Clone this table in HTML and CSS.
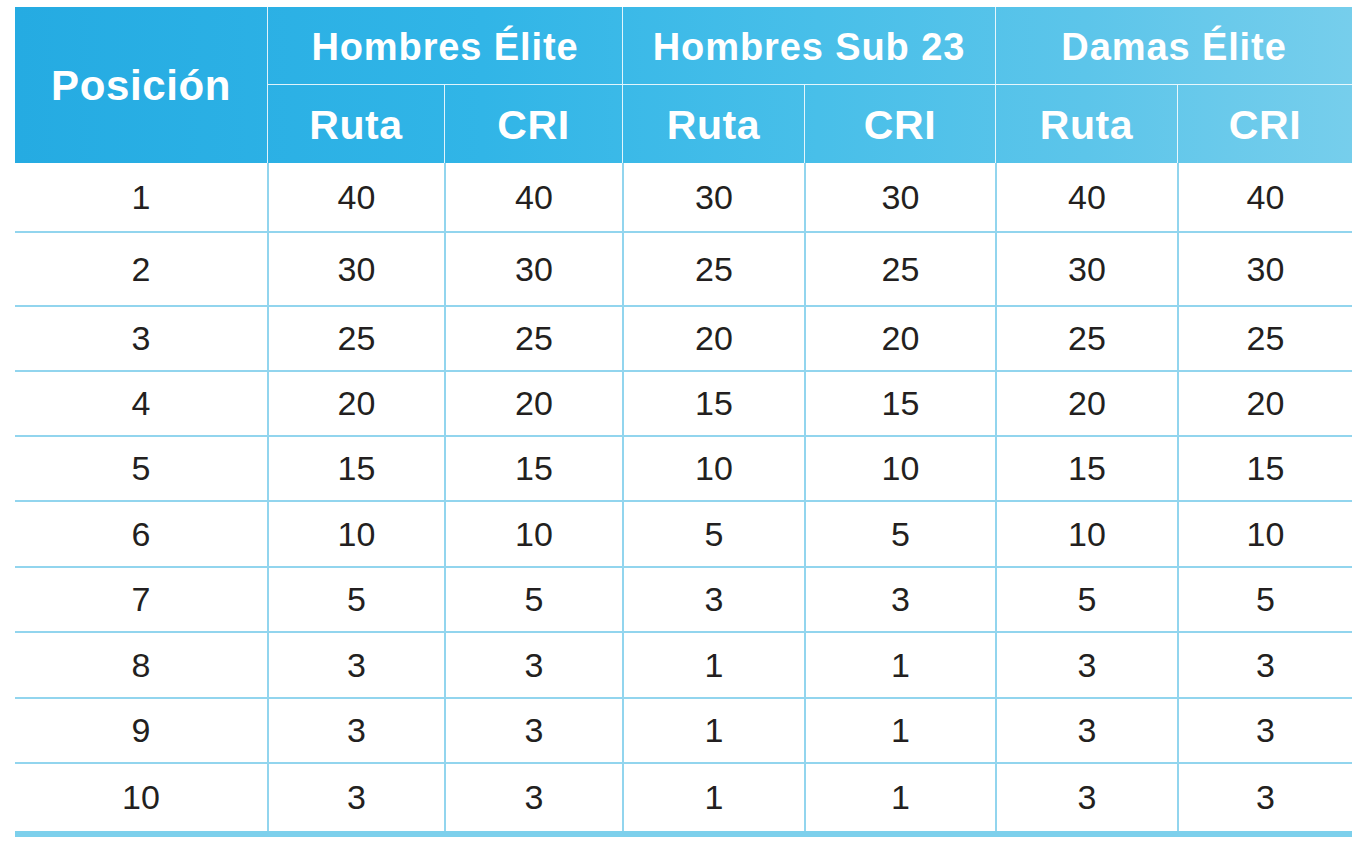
FILE: index.html
```html
<!DOCTYPE html>
<html lang="es">
<head>
<meta charset="utf-8">
<title>Puntos por posición</title>
<link rel="stylesheet" href="styles.css">
</head>
<body>
<div class="wrap">
  <div class="head">
    <div class="hcell pos">Posición</div>
    <div class="hcell group">Hombres Élite</div>
    <div class="hcell group">Hombres Sub 23</div>
    <div class="hcell group">Damas Élite</div>
    <div class="hcell sub">Ruta</div>
    <div class="hcell sub inner">CRI</div>
    <div class="hcell sub">Ruta</div>
    <div class="hcell sub inner">CRI</div>
    <div class="hcell sub">Ruta</div>
    <div class="hcell sub inner">CRI</div>
  </div>
  <div class="body">
    <div class="row"><div class="c">1</div><div class="c">40</div><div class="c">40</div><div class="c">30</div><div class="c">30</div><div class="c">40</div><div class="c">40</div></div>
    <div class="row"><div class="c">2</div><div class="c">30</div><div class="c">30</div><div class="c">25</div><div class="c">25</div><div class="c">30</div><div class="c">30</div></div>
    <div class="row"><div class="c">3</div><div class="c">25</div><div class="c">25</div><div class="c">20</div><div class="c">20</div><div class="c">25</div><div class="c">25</div></div>
    <div class="row"><div class="c">4</div><div class="c">20</div><div class="c">20</div><div class="c">15</div><div class="c">15</div><div class="c">20</div><div class="c">20</div></div>
    <div class="row"><div class="c">5</div><div class="c">15</div><div class="c">15</div><div class="c">10</div><div class="c">10</div><div class="c">15</div><div class="c">15</div></div>
    <div class="row"><div class="c">6</div><div class="c">10</div><div class="c">10</div><div class="c">5</div><div class="c">5</div><div class="c">10</div><div class="c">10</div></div>
    <div class="row"><div class="c">7</div><div class="c">5</div><div class="c">5</div><div class="c">3</div><div class="c">3</div><div class="c">5</div><div class="c">5</div></div>
    <div class="row"><div class="c">8</div><div class="c">3</div><div class="c">3</div><div class="c">1</div><div class="c">1</div><div class="c">3</div><div class="c">3</div></div>
    <div class="row"><div class="c">9</div><div class="c">3</div><div class="c">3</div><div class="c">1</div><div class="c">1</div><div class="c">3</div><div class="c">3</div></div>
    <div class="row"><div class="c">10</div><div class="c">3</div><div class="c">3</div><div class="c">1</div><div class="c">1</div><div class="c">3</div><div class="c">3</div></div>
  </div>
  <div class="band"></div>
</div>
</body>
</html>
```
FILE: styles.css
```css
* { box-sizing: border-box; }
html, body { margin: 0; padding: 0; background: #ffffff; }
body { font-family: "Liberation Sans", Arial, sans-serif; }

.wrap {
  width: 1337px;
  margin: 7px 0 0 15px;
}

.head {
  display: grid;
  grid-template-columns: 252px 177px 178px 182px 191px 182px 175px;
  grid-template-rows: 78px 78px;
  background: linear-gradient(90deg, #25abe2 0%, #31b5e7 35%, #48bfe9 60%, #5cc5ea 80%, #76ceec 100%);
  color: #ffffff;
  font-weight: bold;
}

.hcell {
  display: flex;
  align-items: center;
  justify-content: center;
  border-left: 1px solid rgba(255, 255, 255, 0.85);
  white-space: nowrap;
}

.pos {
  grid-row: 1 / span 2;
  border-left: none;
  font-size: 42px;
  letter-spacing: 0.6px;
  padding-top: 2px;
}

.group {
  grid-column: span 2;
  font-size: 38px;
  letter-spacing: 0.9px;
  padding-top: 4px;
  border-bottom: 1px solid rgba(255, 255, 255, 0.85);
}

.sub {
  font-size: 41px;
  letter-spacing: 0.6px;
  padding-top: 2px;
}

.body {
  display: grid;
  grid-template-rows: 68px 74px 65px 65px 65px 66px 65px 66px 65px 69px;
}

.row {
  display: grid;
  grid-template-columns: 252px 177px 178px 182px 191px 182px 175px;
  border-top: 2px solid #92d5ee;
}

.row:first-child { border-top: none; }

.c {
  display: flex;
  align-items: center;
  justify-content: center;
  font-size: 34px;
  color: #231f20;
  border-left: 2px solid #92d5ee;
}

.c:first-child { border-left: none; }

.band {
  height: 6px;
  background: #7dd0ec;
}
```
